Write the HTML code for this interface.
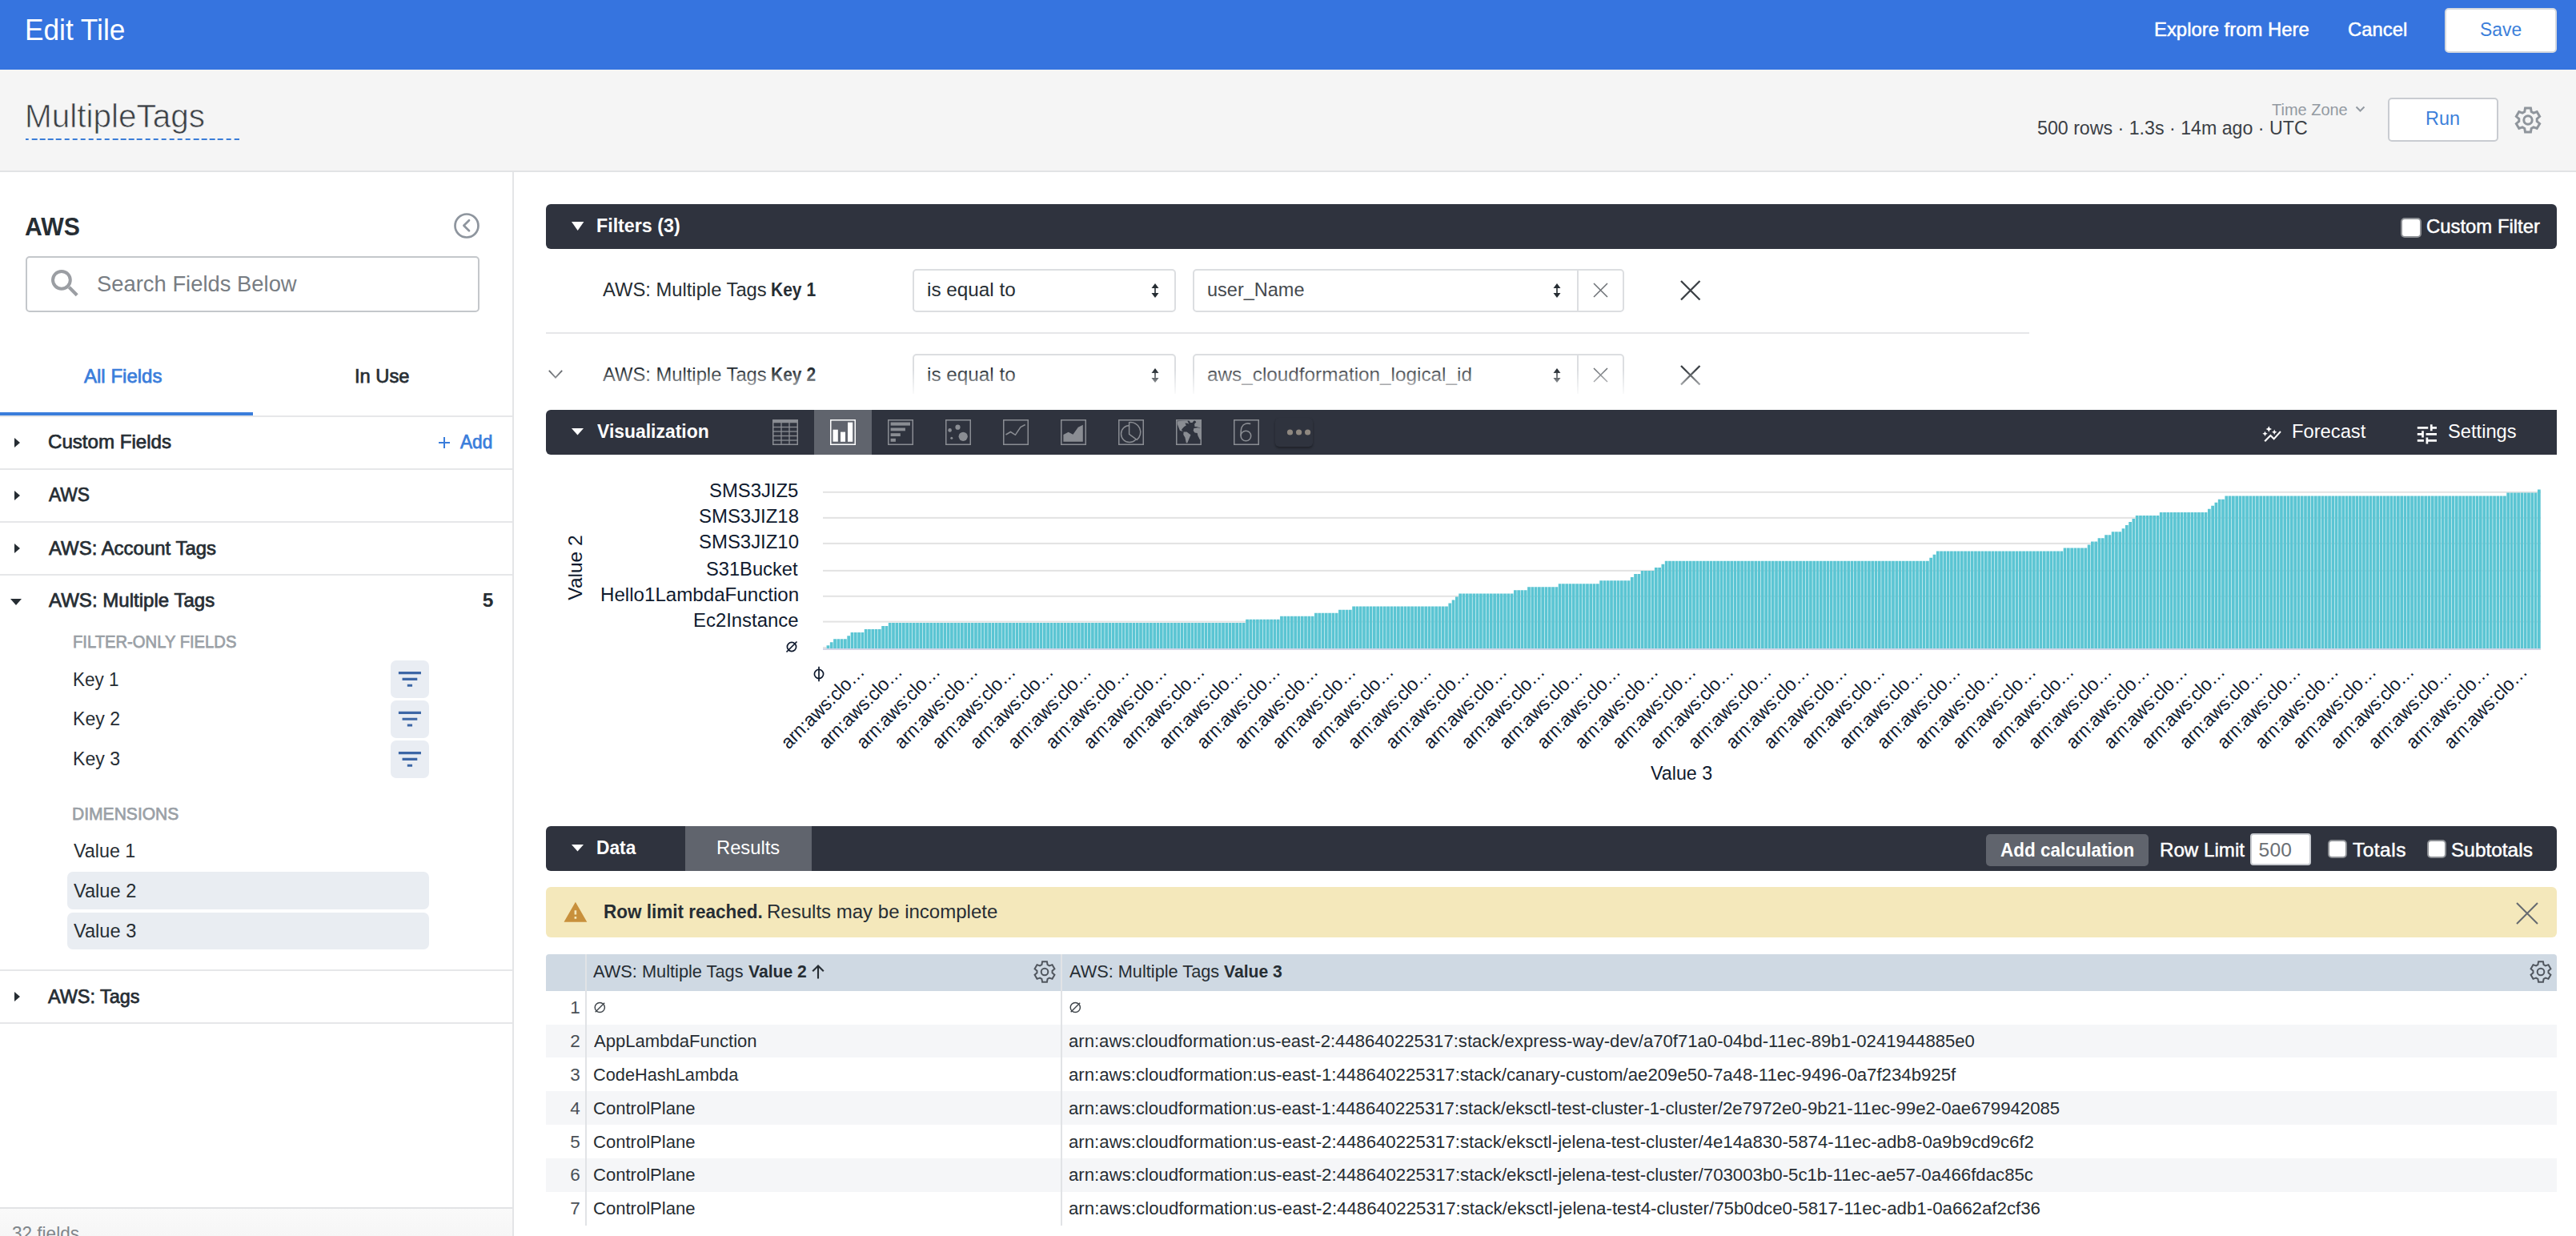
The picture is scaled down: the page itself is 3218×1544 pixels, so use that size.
<!DOCTYPE html>
<html><head><meta charset="utf-8"><style>
html,body{margin:0;padding:0;}
body{width:3218px;height:1544px;position:relative;overflow:hidden;background:#fff;font-family:'Liberation Sans', sans-serif;}
.t{position:absolute;white-space:nowrap;}
svg{display:block}
</style></head><body>
<div style="position:absolute;left:0.0px;top:0.0px;width:3218.0px;height:87.0px;background:#3674df;z-index:0"></div>
<div style="position:absolute;left:3054.0px;top:10.3px;width:140.0px;height:56.2px;background:#fff;border:2px solid #d6d9de;border-radius:5px;box-sizing:border-box;z-index:2"></div>
<div style="position:absolute;left:0.0px;top:87.0px;width:3218.0px;height:126.0px;background:#f5f5f5;z-index:0"></div>
<div style="position:absolute;left:0.0px;top:213.0px;width:3218.0px;height:2.0px;background:#e2e3e5;z-index:1"></div>
<div style="position:absolute;left:32px;top:173px;width:267px;height:2px;z-index:2;background:repeating-linear-gradient(90deg,#3b7dd8 0 6.4px,transparent 6.4px 10.1px);background-position:-2.3px 0"></div>
<svg style="position:absolute;left:2942.00px;top:132.00px;z-index:6;overflow:visible" width="13" height="8" viewBox="0 0 13 8"><path d="M1.5 1.5 L6.5 6.5 L11.5 1.5" fill="none" stroke="#939aa2" stroke-width="2"/></svg>
<div style="position:absolute;left:2982.7px;top:121.9px;width:138.7px;height:55.1px;background:#fff;border:2px solid #c9ccd1;border-radius:5px;box-sizing:border-box;z-index:2"></div>
<svg style="position:absolute;left:3138.00px;top:130.00px;z-index:6;overflow:visible" width="40" height="40" viewBox="0 0 40 40"><path d="M15.76 9.50 L16.56 5.09 L23.44 5.09 L24.24 9.50 L26.97 11.08 L31.19 9.57 L34.63 15.53 L31.21 18.42 L31.21 21.58 L34.63 24.47 L31.19 30.43 L26.97 28.92 L24.24 30.50 L23.44 34.91 L16.56 34.91 L15.76 30.50 L13.03 28.92 L8.81 30.43 L5.37 24.47 L8.79 21.58 L8.79 18.42 L5.37 15.53 L8.81 9.57 L13.03 11.08Z" fill="none" stroke="#8f959c" stroke-width="3" stroke-linejoin="miter"/><circle cx="20" cy="20" r="5.2" fill="none" stroke="#8f959c" stroke-width="3"/></svg>
<div style="position:absolute;left:640.0px;top:215.0px;width:2.0px;height:1329.0px;background:#e4e5e7;z-index:3"></div>
<svg style="position:absolute;left:565.00px;top:264.00px;z-index:6;overflow:visible" width="36" height="36" viewBox="0 0 36 36"><circle cx="18" cy="18" r="14.5" fill="none" stroke="#8e959e" stroke-width="2.7"/><path d="M21 11.3 L14.4 17.8 L21 24.3" fill="none" stroke="#8e959e" stroke-width="2.7" stroke-linecap="round" stroke-linejoin="round"/></svg>
<div style="position:absolute;left:32.4px;top:319.7px;width:567.1px;height:70.3px;background:#fff;border:2px solid #c4c7cb;border-radius:5px;box-sizing:border-box;z-index:2"></div>
<svg style="position:absolute;left:60.00px;top:332.00px;z-index:6;overflow:visible" width="44" height="44" viewBox="0 0 44 44"><circle cx="16.9" cy="17.8" r="10.9" fill="none" stroke="#9b9ea3" stroke-width="4"/><path d="M26.3 26.8 L36.2 36.7" stroke="#9b9ea3" stroke-width="4.2"/></svg>
<div style="position:absolute;left:0.0px;top:515.0px;width:315.6px;height:3.5px;background:#3a7ddb;z-index:3"></div>
<div style="position:absolute;left:0.0px;top:519.0px;width:640.0px;height:2.0px;background:#e6e7e9;z-index:2"></div>
<svg style="position:absolute;left:17.50px;top:546.80px;z-index:6;overflow:visible" width="8" height="12" viewBox="0 0 8 12"><path d="M0 0 L7 6 L0 12Z" fill="#262d33"/></svg>
<svg style="position:absolute;left:17.50px;top:612.50px;z-index:6;overflow:visible" width="8" height="12" viewBox="0 0 8 12"><path d="M0 0 L7 6 L0 12Z" fill="#262d33"/></svg>
<svg style="position:absolute;left:17.50px;top:678.80px;z-index:6;overflow:visible" width="8" height="12" viewBox="0 0 8 12"><path d="M0 0 L7 6 L0 12Z" fill="#262d33"/></svg>
<svg style="position:absolute;left:548.00px;top:546.00px;z-index:6;overflow:visible" width="14" height="14" viewBox="0 0 14 14"><path d="M7 0 V14 M0 7 H14" stroke="#3a7ddb" stroke-width="2"/></svg>
<div style="position:absolute;left:0.0px;top:585.0px;width:640.0px;height:2.0px;background:#e6e7e9;z-index:2"></div>
<div style="position:absolute;left:0.0px;top:651.0px;width:640.0px;height:2.0px;background:#e6e7e9;z-index:2"></div>
<div style="position:absolute;left:0.0px;top:717.0px;width:640.0px;height:2.0px;background:#e6e7e9;z-index:2"></div>
<svg style="position:absolute;left:13.00px;top:747.50px;z-index:6;overflow:visible" width="14" height="8" viewBox="0 0 14 8"><path d="M0 0 L14 0 L7.0 8Z" fill="#262d33"/></svg>
<div style="position:absolute;left:488.0px;top:825.4px;width:47.7px;height:47.0px;background:#e9edf3;border-radius:7px;z-index:2"></div>
<svg style="position:absolute;left:0.00px;top:0.00px;z-index:6;overflow:visible" width="3218" height="1544" viewBox="0 0 3218 1544"><path transform="translate(493.2 829.70) scale(1.56)" fill="#3d67a6" d="M10 18h4v-2h-4v2zM3 6v2h18V6H3zm3 7h12v-2H6v2z"/></svg>
<div style="position:absolute;left:488.0px;top:875.2px;width:47.7px;height:47.0px;background:#e9edf3;border-radius:7px;z-index:2"></div>
<svg style="position:absolute;left:0.00px;top:0.00px;z-index:6;overflow:visible" width="3218" height="1544" viewBox="0 0 3218 1544"><path transform="translate(493.2 879.50) scale(1.56)" fill="#3d67a6" d="M10 18h4v-2h-4v2zM3 6v2h18V6H3zm3 7h12v-2H6v2z"/></svg>
<div style="position:absolute;left:488.0px;top:925.4px;width:47.7px;height:47.0px;background:#e9edf3;border-radius:7px;z-index:2"></div>
<svg style="position:absolute;left:0.00px;top:0.00px;z-index:6;overflow:visible" width="3218" height="1544" viewBox="0 0 3218 1544"><path transform="translate(493.2 929.70) scale(1.56)" fill="#3d67a6" d="M10 18h4v-2h-4v2zM3 6v2h18V6H3zm3 7h12v-2H6v2z"/></svg>
<div style="position:absolute;left:84.0px;top:1089.0px;width:451.7px;height:47.2px;background:#e9edf2;border-radius:7px;z-index:2"></div>
<div style="position:absolute;left:84.0px;top:1139.5px;width:451.7px;height:46.8px;background:#e9edf2;border-radius:7px;z-index:2"></div>
<div style="position:absolute;left:0.0px;top:1211.0px;width:640.0px;height:2.0px;background:#e6e7e9;z-index:2"></div>
<svg style="position:absolute;left:17.50px;top:1239.00px;z-index:6;overflow:visible" width="8" height="12" viewBox="0 0 8 12"><path d="M0 0 L7 6 L0 12Z" fill="#262d33"/></svg>
<div style="position:absolute;left:0.0px;top:1277.0px;width:640.0px;height:2.0px;background:#e6e7e9;z-index:2"></div>
<div style="position:absolute;left:0.0px;top:1509.0px;width:640.0px;height:35.0px;background:linear-gradient(#fafafa,#f6f6f6);z-index:1"></div>
<div style="position:absolute;left:0.0px;top:1508.0px;width:640.0px;height:2.0px;background:#e2e3e5;z-index:2"></div>
<div style="position:absolute;left:682.0px;top:255.0px;width:2512.0px;height:55.5px;background:#2f333e;border-radius:6px;z-index:2"></div>
<svg style="position:absolute;left:714.30px;top:277.00px;z-index:6;overflow:visible" width="16" height="11" viewBox="0 0 16 11"><path d="M0 0 H15.4 L7.7 11Z" fill="#fff"/></svg>
<div style="position:absolute;left:2999.2px;top:272.2px;width:25.4px;height:25.1px;background:#fff;border:2px solid #8c8f94;border-radius:5px;box-sizing:border-box;z-index:3"></div>
<div style="position:absolute;left:1140.0px;top:335.6px;width:329.3px;height:54.5px;background:#fff;border:2px solid #dcdee1;border-radius:5px;box-sizing:border-box;z-index:2"></div>
<svg style="position:absolute;left:1437.80px;top:353.60px;z-index:6;overflow:visible" width="10" height="18" viewBox="0 0 10 18"><path d="M5 0 L9.5 6 H0.5Z M5 18 L9.5 12 H0.5Z" fill="#262d33"/><path d="M5 5 V13" stroke="#262d33" stroke-width="1.6"/></svg>
<div style="position:absolute;left:1490.2px;top:335.6px;width:538.8px;height:54.5px;background:#fff;border:2px solid #dcdee1;border-radius:5px;box-sizing:border-box;z-index:2"></div>
<div style="position:absolute;left:1970.2px;top:335.6px;width:2.0px;height:54.5px;background:#dcdee1;z-index:3"></div>
<svg style="position:absolute;left:1939.70px;top:353.60px;z-index:6;overflow:visible" width="10" height="18" viewBox="0 0 10 18"><path d="M5 0 L9.5 6 H0.5Z M5 18 L9.5 12 H0.5Z" fill="#262d33"/><path d="M5 5 V13" stroke="#262d33" stroke-width="1.6"/></svg>
<svg style="position:absolute;left:1991.20px;top:354.10px;z-index:6;overflow:visible" width="17" height="17" viewBox="0 0 17 17"><path d="M0 0 L17 17 M17 0 L0 17" stroke="#6b6f74" stroke-width="1.5"/></svg>
<svg style="position:absolute;left:2099.85px;top:350.85px;z-index:6;overflow:visible" width="23.5" height="23.5" viewBox="0 0 23.5 23.5"><path d="M0 0 L23.5 23.5 M23.5 0 L0 23.5" stroke="#3a3f44" stroke-width="2.3"/></svg>
<div style="position:absolute;left:682.0px;top:415.0px;width:1853.0px;height:2.0px;background:#e6e7e9;z-index:2"></div>
<svg style="position:absolute;left:684.80px;top:462.00px;z-index:6;overflow:visible" width="18" height="12" viewBox="0 0 18 12"><path d="M0.8 0.8 L9 9.6 L17.2 0.8" fill="none" stroke="#5f6368" stroke-width="1.8"/></svg>
<div style="position:absolute;left:1140.0px;top:441.7px;width:329.3px;height:54.5px;background:#fff;border:2px solid #dcdee1;border-radius:5px;box-sizing:border-box;z-index:2"></div>
<svg style="position:absolute;left:1437.80px;top:459.70px;z-index:6;overflow:visible" width="10" height="18" viewBox="0 0 10 18"><path d="M5 0 L9.5 6 H0.5Z M5 18 L9.5 12 H0.5Z" fill="#262d33"/><path d="M5 5 V13" stroke="#262d33" stroke-width="1.6"/></svg>
<div style="position:absolute;left:1490.2px;top:441.7px;width:538.8px;height:54.5px;background:#fff;border:2px solid #dcdee1;border-radius:5px;box-sizing:border-box;z-index:2"></div>
<div style="position:absolute;left:1970.2px;top:441.7px;width:2.0px;height:54.5px;background:#dcdee1;z-index:3"></div>
<svg style="position:absolute;left:1939.70px;top:459.70px;z-index:6;overflow:visible" width="10" height="18" viewBox="0 0 10 18"><path d="M5 0 L9.5 6 H0.5Z M5 18 L9.5 12 H0.5Z" fill="#262d33"/><path d="M5 5 V13" stroke="#262d33" stroke-width="1.6"/></svg>
<svg style="position:absolute;left:1991.20px;top:460.20px;z-index:6;overflow:visible" width="17" height="17" viewBox="0 0 17 17"><path d="M0 0 L17 17 M17 0 L0 17" stroke="#6b6f74" stroke-width="1.5"/></svg>
<svg style="position:absolute;left:2099.85px;top:456.95px;z-index:6;overflow:visible" width="23.5" height="23.5" viewBox="0 0 23.5 23.5"><path d="M0 0 L23.5 23.5 M23.5 0 L0 23.5" stroke="#3a3f44" stroke-width="2.3"/></svg>
<div style="position:absolute;left:642.0px;top:492.0px;width:2576.0px;height:20.0px;background:#fff;z-index:20"></div>
<div style="position:absolute;left:642.0px;top:462.0px;width:2576.0px;height:30.0px;background:linear-gradient(rgba(255,255,255,0),rgba(255,255,255,0.85));z-index:19"></div>
<div style="position:absolute;left:682.0px;top:512.0px;width:2512.0px;height:55.5px;background:#2f333e;border-radius:6px 0 0 6px;z-index:2"></div>
<div style="position:absolute;left:1017.0px;top:512.0px;width:72.0px;height:55.5px;background:#60646d;z-index:3"></div>
<svg style="position:absolute;left:714.30px;top:534.50px;z-index:6;overflow:visible" width="16" height="9" viewBox="0 0 16 9"><path d="M0 0 H15 L7.5 8.6Z" fill="#fff"/></svg>
<svg style="position:absolute;left:965.00px;top:524.20px;z-index:6;overflow:visible" width="32" height="32" viewBox="0 0 32 32"><rect x="0.75" y="0.75" width="30.5" height="30.5" fill="none" stroke="#8a8d93" stroke-width="1.5"/><rect x="0.75" y="0.75" width="30.5" height="3.5" fill="#8a8d93"/><path d="M1 9.5 H31" stroke="#8a8d93" stroke-width="1.3"/><path d="M1 15 H31" stroke="#8a8d93" stroke-width="1.3"/><path d="M1 20.5 H31" stroke="#8a8d93" stroke-width="1.3"/><path d="M1 26 H31" stroke="#8a8d93" stroke-width="1.3"/><path d="M11 1 V31" stroke="#8a8d93" stroke-width="1.3"/><path d="M21 1 V31" stroke="#8a8d93" stroke-width="1.3"/></svg>
<svg style="position:absolute;left:1037.00px;top:524.20px;z-index:6;overflow:visible" width="32" height="32" viewBox="0 0 32 32"><rect x="0.75" y="0.75" width="30.5" height="30.5" fill="none" stroke="#fff" stroke-width="1.5"/><rect x="3.5" y="12.7" width="6.3" height="15" fill="#fff"/><rect x="13" y="15.6" width="6" height="12.2" fill="#fff"/><rect x="22" y="3.6" width="6.2" height="24.2" fill="#fff"/></svg>
<svg style="position:absolute;left:1109.00px;top:524.20px;z-index:6;overflow:visible" width="32" height="32" viewBox="0 0 32 32"><rect x="0.75" y="0.75" width="30.5" height="30.5" fill="none" stroke="#8a8d93" stroke-width="1.5"/><rect x="3.6" y="3.5" width="24.4" height="4.1" fill="#8a8d93"/><rect x="3.6" y="10.5" width="18.3" height="3.8" fill="#8a8d93"/><rect x="3.6" y="17.2" width="12.2" height="3.8" fill="#8a8d93"/><rect x="3.6" y="23.8" width="6.3" height="4" fill="#8a8d93"/></svg>
<svg style="position:absolute;left:1181.20px;top:524.20px;z-index:6;overflow:visible" width="32" height="32" viewBox="0 0 32 32"><rect x="0.75" y="0.75" width="30.5" height="30.5" fill="none" stroke="#8a8d93" stroke-width="1.5"/><circle cx="5.6" cy="13.4" r="2.3" fill="#8a8d93"/><circle cx="15.5" cy="9.7" r="3.1" fill="#8a8d93"/><circle cx="7.8" cy="23.3" r="1.5" fill="#8a8d93"/><circle cx="22.2" cy="21.3" r="5.6" fill="#8a8d93"/></svg>
<svg style="position:absolute;left:1253.10px;top:524.20px;z-index:6;overflow:visible" width="32" height="32" viewBox="0 0 32 32"><rect x="0.75" y="0.75" width="30.5" height="30.5" fill="none" stroke="#8a8d93" stroke-width="1.5"/><path d="M3.5 19 L9.5 15.5 L15.4 19.3 L21.9 9.6 L27.7 6.5" fill="none" stroke="#8a8d93" stroke-width="1.5"/></svg>
<svg style="position:absolute;left:1325.10px;top:524.20px;z-index:6;overflow:visible" width="32" height="32" viewBox="0 0 32 32"><rect x="0.75" y="0.75" width="30.5" height="30.5" fill="none" stroke="#8a8d93" stroke-width="1.5"/><path d="M3.4 19 L9.6 15.8 L15.4 18.8 L21.8 9.7 L27.8 6.8 V27.7 H3.4Z" fill="#8a8d93"/></svg>
<svg style="position:absolute;left:1397.10px;top:524.20px;z-index:6;overflow:visible" width="32" height="32" viewBox="0 0 32 32"><rect x="0.75" y="0.75" width="30.5" height="30.5" fill="none" stroke="#8a8d93" stroke-width="1.5"/><circle cx="14" cy="18" r="10.5" fill="none" stroke="#8a8d93" stroke-width="1.5"/><path d="M13.6 3.7 A12.3 12.3 0 0 1 23.2 25.4 L13.6 18.3Z" fill="#2f333e" stroke="#8a8d93" stroke-width="1.5"/></svg>
<svg style="position:absolute;left:1468.50px;top:524.20px;z-index:6;overflow:visible" width="32" height="32" viewBox="0 0 32 32"><rect x="0.75" y="0.75" width="30.5" height="30.5" fill="none" stroke="#8a8d93" stroke-width="1.5"/><path d="M1.6 2.2 L8 1.8 L14.2 1.6 L16.4 5.7 L14.2 4.8 L11.4 4.6 L12.8 7.5 L10.3 8.9 L7.1 12.5 L8.2 15 L9.6 16 L6.8 14.2 L5 13.9 L3.2 9.6 L1.8 5.7Z M16.6 1.1 L22.8 1.1 L20.6 3.9 L18 3.9Z M23.5 1.1 L31.6 1.1 L31.6 10.7 L28.8 10 L25.6 8.9 L23.5 8.9 L23.1 5.7 L25.3 3.2Z M22.4 11 L27.1 10.3 L31.6 11 L31.6 24.6 L29.9 25.3 L27.4 20.3 L26.7 17.1 L23.5 16.4 L21.7 13.9Z M9.6 15.6 L13.5 15.5 L18.5 19.2 L17.1 22.4 L14.2 29.5 L12.8 29.2 L11.4 22.4 L9.3 18.9Z" fill="#8a8d93"/></svg>
<svg style="position:absolute;left:1541.30px;top:524.20px;z-index:6;overflow:visible" width="32" height="32" viewBox="0 0 32 32"><rect x="0.75" y="0.75" width="30.5" height="30.5" fill="none" stroke="#8a8d93" stroke-width="1.5"/><path d="M21.3 5.6 C17.5 4.2 12.5 4.8 10.3 9.5 C9.2 12 9 15 9.1 20.3" fill="none" stroke="#8a8d93" stroke-width="1.6"/><circle cx="15.4" cy="20.5" r="6.3" fill="none" stroke="#8a8d93" stroke-width="1.6"/></svg>
<div style="position:absolute;left:1593.0px;top:521.6px;width:47.3px;height:36.4px;background:#2f333e;border-radius:5px;box-shadow:0 2px 3px rgba(0,0,0,0.35);z-index:3"></div>
<svg style="position:absolute;left:1605.00px;top:535.00px;z-index:6;overflow:visible" width="34" height="10" viewBox="0 0 34 10"><circle cx="6.5" cy="5" r="3.6" fill="#8f8880"/><circle cx="17.6" cy="5" r="3.6" fill="#8f8880"/><circle cx="28.6" cy="5" r="3.6" fill="#8f8880"/></svg>
<svg style="position:absolute;left:0.00px;top:0.00px;z-index:6;overflow:visible" width="3218" height="1544" viewBox="0 0 3218 1544"><path transform="translate(2825.24 530.17) scale(1.064)" fill="#fff" d="M14.06 9.94L12 9l2.06-.94L15 6l.94 2.06L18 9l-2.06.94L15 12zM4 14l.94-2.06L7 11l-2.06-.94L4 8l-.94 2.06L1 11l2.06.94zm4.5-5l1.09-2.41L12 5.5 9.59 4.41 8.5 2 7.41 4.41 5 5.5l2.41 1.09zm-4 11.5l6-6.01 4 4L23 8.93l-1.41-1.41-7.09 7.97-4-4L3 19l1.5 1.5z"/></svg>
<svg style="position:absolute;left:0.00px;top:0.00px;z-index:6;overflow:visible" width="3218" height="1544" viewBox="0 0 3218 1544"><path transform="translate(3015.77 526.27) scale(1.344)" fill="#fff" d="M3 17v2h6v-2H3zM3 5v2h10V5H3zm10 16v-2h8v-2h-8v-2h-2v6h2zM7 9v2H3v2h4v2h2V9H7zm14 4v-2H11v2h10zm-6-4h2V7h4V5h-4V3h-2v6z"/></svg>
<div class="t" style="left:658.75px;top:693.6px;width:120px;height:30px;text-align:center;font-size:24.5px;line-height:30px;color:#0f1a2e;transform:rotate(-90deg);z-index:5">Value 2</div>
<svg style="position:absolute;left:981.00px;top:800.00px;z-index:6;overflow:visible" width="16" height="16" viewBox="0 0 16 16"><circle cx="8" cy="8" r="5.6" fill="none" stroke="#0f1a2e" stroke-width="1.7"/><path d="M1.5 14.5 L14.5 1.5" stroke="#0f1a2e" stroke-width="1.7"/></svg>
<svg style="position:absolute;left:0;top:0;z-index:4" width="3218" height="1544" viewBox="0 0 3218 1544"><rect x="1028" y="775.60" width="2146" height="2" fill="#e3e3e3"/><rect x="1028" y="743.80" width="2146" height="2" fill="#e3e3e3"/><rect x="1028" y="711.90" width="2146" height="2" fill="#e3e3e3"/><rect x="1028" y="677.90" width="2146" height="2" fill="#e3e3e3"/><rect x="1028" y="645.90" width="2146" height="2" fill="#e3e3e3"/><rect x="1028" y="613.80" width="2146" height="2" fill="#e3e3e3"/><rect x="1028" y="808.0" width="4.292" height="2.4" fill="#e3e3e3"/><path d="M1032.57 810.4V806.34h3.73V810.4zM1036.86 810.4V802.28h3.73V810.4zM1041.16 810.4V798.22h3.73V810.4zM1045.45 810.4V798.22h3.73V810.4zM1049.74 810.4V798.22h3.73V810.4zM1054.03 810.4V798.22h3.73V810.4zM1058.32 810.4V794.16h3.73V810.4zM1062.62 810.4V790.10h3.73V810.4zM1066.91 810.4V790.10h3.73V810.4zM1071.20 810.4V790.10h3.73V810.4zM1075.49 810.4V790.10h3.73V810.4zM1079.78 810.4V786.04h3.73V810.4zM1084.08 810.4V786.04h3.73V810.4zM1088.37 810.4V786.04h3.73V810.4zM1092.66 810.4V786.04h3.73V810.4zM1096.95 810.4V786.04h3.73V810.4zM1101.24 810.4V781.98h3.73V810.4zM1105.54 810.4V781.98h3.73V810.4zM1109.83 810.4V777.92h3.73V810.4zM1114.12 810.4V777.92h3.73V810.4zM1118.41 810.4V777.92h3.73V810.4zM1122.70 810.4V777.92h3.73V810.4zM1127.00 810.4V777.92h3.73V810.4zM1131.29 810.4V777.92h3.73V810.4zM1135.58 810.4V777.92h3.73V810.4zM1139.87 810.4V777.92h3.73V810.4zM1144.16 810.4V777.92h3.73V810.4zM1148.46 810.4V777.92h3.73V810.4zM1152.75 810.4V777.92h3.73V810.4zM1157.04 810.4V777.92h3.73V810.4zM1161.33 810.4V777.92h3.73V810.4zM1165.62 810.4V777.92h3.73V810.4zM1169.92 810.4V777.92h3.73V810.4zM1174.21 810.4V777.92h3.73V810.4zM1178.50 810.4V777.92h3.73V810.4zM1182.79 810.4V777.92h3.73V810.4zM1187.08 810.4V777.92h3.73V810.4zM1191.38 810.4V777.92h3.73V810.4zM1195.67 810.4V777.92h3.73V810.4zM1199.96 810.4V777.92h3.73V810.4zM1204.25 810.4V777.92h3.73V810.4zM1208.54 810.4V777.92h3.73V810.4zM1212.84 810.4V777.92h3.73V810.4zM1217.13 810.4V777.92h3.73V810.4zM1221.42 810.4V777.92h3.73V810.4zM1225.71 810.4V777.92h3.73V810.4zM1230.00 810.4V777.92h3.73V810.4zM1234.30 810.4V777.92h3.73V810.4zM1238.59 810.4V777.92h3.73V810.4zM1242.88 810.4V777.92h3.73V810.4zM1247.17 810.4V777.92h3.73V810.4zM1251.46 810.4V777.92h3.73V810.4zM1255.76 810.4V777.92h3.73V810.4zM1260.05 810.4V777.92h3.73V810.4zM1264.34 810.4V777.92h3.73V810.4zM1268.63 810.4V777.92h3.73V810.4zM1272.92 810.4V777.92h3.73V810.4zM1277.22 810.4V777.92h3.73V810.4zM1281.51 810.4V777.92h3.73V810.4zM1285.80 810.4V777.92h3.73V810.4zM1290.09 810.4V777.92h3.73V810.4zM1294.38 810.4V777.92h3.73V810.4zM1298.68 810.4V777.92h3.73V810.4zM1302.97 810.4V777.92h3.73V810.4zM1307.26 810.4V777.92h3.73V810.4zM1311.55 810.4V777.92h3.73V810.4zM1315.84 810.4V777.92h3.73V810.4zM1320.14 810.4V777.92h3.73V810.4zM1324.43 810.4V777.92h3.73V810.4zM1328.72 810.4V777.92h3.73V810.4zM1333.01 810.4V777.92h3.73V810.4zM1337.30 810.4V777.92h3.73V810.4zM1341.60 810.4V777.92h3.73V810.4zM1345.89 810.4V777.92h3.73V810.4zM1350.18 810.4V777.92h3.73V810.4zM1354.47 810.4V777.92h3.73V810.4zM1358.76 810.4V777.92h3.73V810.4zM1363.06 810.4V777.92h3.73V810.4zM1367.35 810.4V777.92h3.73V810.4zM1371.64 810.4V777.92h3.73V810.4zM1375.93 810.4V777.92h3.73V810.4zM1380.22 810.4V777.92h3.73V810.4zM1384.52 810.4V777.92h3.73V810.4zM1388.81 810.4V777.92h3.73V810.4zM1393.10 810.4V777.92h3.73V810.4zM1397.39 810.4V777.92h3.73V810.4zM1401.68 810.4V777.92h3.73V810.4zM1405.98 810.4V777.92h3.73V810.4zM1410.27 810.4V777.92h3.73V810.4zM1414.56 810.4V777.92h3.73V810.4zM1418.85 810.4V777.92h3.73V810.4zM1423.14 810.4V777.92h3.73V810.4zM1427.44 810.4V777.92h3.73V810.4zM1431.73 810.4V777.92h3.73V810.4zM1436.02 810.4V777.92h3.73V810.4zM1440.31 810.4V777.92h3.73V810.4zM1444.60 810.4V777.92h3.73V810.4zM1448.90 810.4V777.92h3.73V810.4zM1453.19 810.4V777.92h3.73V810.4zM1457.48 810.4V777.92h3.73V810.4zM1461.77 810.4V777.92h3.73V810.4zM1466.06 810.4V777.92h3.73V810.4zM1470.36 810.4V777.92h3.73V810.4zM1474.65 810.4V777.92h3.73V810.4zM1478.94 810.4V777.92h3.73V810.4zM1483.23 810.4V777.92h3.73V810.4zM1487.52 810.4V777.92h3.73V810.4zM1491.82 810.4V777.92h3.73V810.4zM1496.11 810.4V777.92h3.73V810.4zM1500.40 810.4V777.92h3.73V810.4zM1504.69 810.4V777.92h3.73V810.4zM1508.98 810.4V777.92h3.73V810.4zM1513.28 810.4V777.92h3.73V810.4zM1517.57 810.4V777.92h3.73V810.4zM1521.86 810.4V777.92h3.73V810.4zM1526.15 810.4V777.92h3.73V810.4zM1530.44 810.4V777.92h3.73V810.4zM1534.74 810.4V777.92h3.73V810.4zM1539.03 810.4V777.92h3.73V810.4zM1543.32 810.4V777.92h3.73V810.4zM1547.61 810.4V777.92h3.73V810.4zM1551.90 810.4V777.92h3.73V810.4zM1556.20 810.4V773.86h3.73V810.4zM1560.49 810.4V773.86h3.73V810.4zM1564.78 810.4V773.86h3.73V810.4zM1569.07 810.4V773.86h3.73V810.4zM1573.36 810.4V773.86h3.73V810.4zM1577.66 810.4V773.86h3.73V810.4zM1581.95 810.4V773.86h3.73V810.4zM1586.24 810.4V773.86h3.73V810.4zM1590.53 810.4V773.86h3.73V810.4zM1594.82 810.4V773.86h3.73V810.4zM1599.12 810.4V769.80h3.73V810.4zM1603.41 810.4V769.80h3.73V810.4zM1607.70 810.4V769.80h3.73V810.4zM1611.99 810.4V769.80h3.73V810.4zM1616.28 810.4V769.80h3.73V810.4zM1620.58 810.4V769.80h3.73V810.4zM1624.87 810.4V769.80h3.73V810.4zM1629.16 810.4V769.80h3.73V810.4zM1633.45 810.4V769.80h3.73V810.4zM1637.74 810.4V769.80h3.73V810.4zM1642.04 810.4V765.74h3.73V810.4zM1646.33 810.4V765.74h3.73V810.4zM1650.62 810.4V765.74h3.73V810.4zM1654.91 810.4V765.74h3.73V810.4zM1659.20 810.4V765.74h3.73V810.4zM1663.50 810.4V765.74h3.73V810.4zM1667.79 810.4V765.74h3.73V810.4zM1672.08 810.4V761.68h3.73V810.4zM1676.37 810.4V761.68h3.73V810.4zM1680.66 810.4V761.68h3.73V810.4zM1684.96 810.4V761.68h3.73V810.4zM1689.25 810.4V757.62h3.73V810.4zM1693.54 810.4V757.62h3.73V810.4zM1697.83 810.4V757.62h3.73V810.4zM1702.12 810.4V757.62h3.73V810.4zM1706.42 810.4V757.62h3.73V810.4zM1710.71 810.4V757.62h3.73V810.4zM1715.00 810.4V757.62h3.73V810.4zM1719.29 810.4V757.62h3.73V810.4zM1723.58 810.4V757.62h3.73V810.4zM1727.88 810.4V757.62h3.73V810.4zM1732.17 810.4V757.62h3.73V810.4zM1736.46 810.4V757.62h3.73V810.4zM1740.75 810.4V757.62h3.73V810.4zM1745.04 810.4V757.62h3.73V810.4zM1749.34 810.4V757.62h3.73V810.4zM1753.63 810.4V757.62h3.73V810.4zM1757.92 810.4V757.62h3.73V810.4zM1762.21 810.4V757.62h3.73V810.4zM1766.50 810.4V757.62h3.73V810.4zM1770.80 810.4V757.62h3.73V810.4zM1775.09 810.4V757.62h3.73V810.4zM1779.38 810.4V757.62h3.73V810.4zM1783.67 810.4V757.62h3.73V810.4zM1787.96 810.4V757.62h3.73V810.4zM1792.26 810.4V757.62h3.73V810.4zM1796.55 810.4V757.62h3.73V810.4zM1800.84 810.4V757.62h3.73V810.4zM1805.13 810.4V757.62h3.73V810.4zM1809.42 810.4V753.56h3.73V810.4zM1813.72 810.4V749.50h3.73V810.4zM1818.01 810.4V745.44h3.73V810.4zM1822.30 810.4V741.38h3.73V810.4zM1826.59 810.4V741.38h3.73V810.4zM1830.88 810.4V741.38h3.73V810.4zM1835.18 810.4V741.38h3.73V810.4zM1839.47 810.4V741.38h3.73V810.4zM1843.76 810.4V741.38h3.73V810.4zM1848.05 810.4V741.38h3.73V810.4zM1852.34 810.4V741.38h3.73V810.4zM1856.64 810.4V741.38h3.73V810.4zM1860.93 810.4V741.38h3.73V810.4zM1865.22 810.4V741.38h3.73V810.4zM1869.51 810.4V741.38h3.73V810.4zM1873.80 810.4V741.38h3.73V810.4zM1878.10 810.4V741.38h3.73V810.4zM1882.39 810.4V741.38h3.73V810.4zM1886.68 810.4V741.38h3.73V810.4zM1890.97 810.4V737.32h3.73V810.4zM1895.26 810.4V737.32h3.73V810.4zM1899.56 810.4V737.32h3.73V810.4zM1903.85 810.4V737.32h3.73V810.4zM1908.14 810.4V733.26h3.73V810.4zM1912.43 810.4V733.26h3.73V810.4zM1916.72 810.4V733.26h3.73V810.4zM1921.02 810.4V733.26h3.73V810.4zM1925.31 810.4V733.26h3.73V810.4zM1929.60 810.4V733.26h3.73V810.4zM1933.89 810.4V733.26h3.73V810.4zM1938.18 810.4V733.26h3.73V810.4zM1942.48 810.4V733.26h3.73V810.4zM1946.77 810.4V729.20h3.73V810.4zM1951.06 810.4V729.20h3.73V810.4zM1955.35 810.4V729.20h3.73V810.4zM1959.64 810.4V729.20h3.73V810.4zM1963.94 810.4V729.20h3.73V810.4zM1968.23 810.4V729.20h3.73V810.4zM1972.52 810.4V729.20h3.73V810.4zM1976.81 810.4V729.20h3.73V810.4zM1981.10 810.4V729.20h3.73V810.4zM1985.40 810.4V729.20h3.73V810.4zM1989.69 810.4V729.20h3.73V810.4zM1993.98 810.4V729.20h3.73V810.4zM1998.27 810.4V725.14h3.73V810.4zM2002.56 810.4V725.14h3.73V810.4zM2006.86 810.4V725.14h3.73V810.4zM2011.15 810.4V725.14h3.73V810.4zM2015.44 810.4V725.14h3.73V810.4zM2019.73 810.4V725.14h3.73V810.4zM2024.02 810.4V725.14h3.73V810.4zM2028.32 810.4V725.14h3.73V810.4zM2032.61 810.4V725.14h3.73V810.4zM2036.90 810.4V721.08h3.73V810.4zM2041.19 810.4V717.02h3.73V810.4zM2045.48 810.4V717.02h3.73V810.4zM2049.78 810.4V712.96h3.73V810.4zM2054.07 810.4V712.96h3.73V810.4zM2058.36 810.4V712.96h3.73V810.4zM2062.65 810.4V712.96h3.73V810.4zM2066.94 810.4V708.90h3.73V810.4zM2071.24 810.4V708.90h3.73V810.4zM2075.53 810.4V704.84h3.73V810.4zM2079.82 810.4V700.78h3.73V810.4zM2084.11 810.4V700.78h3.73V810.4zM2088.40 810.4V700.78h3.73V810.4zM2092.70 810.4V700.78h3.73V810.4zM2096.99 810.4V700.78h3.73V810.4zM2101.28 810.4V700.78h3.73V810.4zM2105.57 810.4V700.78h3.73V810.4zM2109.86 810.4V700.78h3.73V810.4zM2114.16 810.4V700.78h3.73V810.4zM2118.45 810.4V700.78h3.73V810.4zM2122.74 810.4V700.78h3.73V810.4zM2127.03 810.4V700.78h3.73V810.4zM2131.32 810.4V700.78h3.73V810.4zM2135.62 810.4V700.78h3.73V810.4zM2139.91 810.4V700.78h3.73V810.4zM2144.20 810.4V700.78h3.73V810.4zM2148.49 810.4V700.78h3.73V810.4zM2152.78 810.4V700.78h3.73V810.4zM2157.08 810.4V700.78h3.73V810.4zM2161.37 810.4V700.78h3.73V810.4zM2165.66 810.4V700.78h3.73V810.4zM2169.95 810.4V700.78h3.73V810.4zM2174.24 810.4V700.78h3.73V810.4zM2178.54 810.4V700.78h3.73V810.4zM2182.83 810.4V700.78h3.73V810.4zM2187.12 810.4V700.78h3.73V810.4zM2191.41 810.4V700.78h3.73V810.4zM2195.70 810.4V700.78h3.73V810.4zM2200.00 810.4V700.78h3.73V810.4zM2204.29 810.4V700.78h3.73V810.4zM2208.58 810.4V700.78h3.73V810.4zM2212.87 810.4V700.78h3.73V810.4zM2217.16 810.4V700.78h3.73V810.4zM2221.46 810.4V700.78h3.73V810.4zM2225.75 810.4V700.78h3.73V810.4zM2230.04 810.4V700.78h3.73V810.4zM2234.33 810.4V700.78h3.73V810.4zM2238.62 810.4V700.78h3.73V810.4zM2242.92 810.4V700.78h3.73V810.4zM2247.21 810.4V700.78h3.73V810.4zM2251.50 810.4V700.78h3.73V810.4zM2255.79 810.4V700.78h3.73V810.4zM2260.08 810.4V700.78h3.73V810.4zM2264.38 810.4V700.78h3.73V810.4zM2268.67 810.4V700.78h3.73V810.4zM2272.96 810.4V700.78h3.73V810.4zM2277.25 810.4V700.78h3.73V810.4zM2281.54 810.4V700.78h3.73V810.4zM2285.84 810.4V700.78h3.73V810.4zM2290.13 810.4V700.78h3.73V810.4zM2294.42 810.4V700.78h3.73V810.4zM2298.71 810.4V700.78h3.73V810.4zM2303.00 810.4V700.78h3.73V810.4zM2307.30 810.4V700.78h3.73V810.4zM2311.59 810.4V700.78h3.73V810.4zM2315.88 810.4V700.78h3.73V810.4zM2320.17 810.4V700.78h3.73V810.4zM2324.46 810.4V700.78h3.73V810.4zM2328.76 810.4V700.78h3.73V810.4zM2333.05 810.4V700.78h3.73V810.4zM2337.34 810.4V700.78h3.73V810.4zM2341.63 810.4V700.78h3.73V810.4zM2345.92 810.4V700.78h3.73V810.4zM2350.22 810.4V700.78h3.73V810.4zM2354.51 810.4V700.78h3.73V810.4zM2358.80 810.4V700.78h3.73V810.4zM2363.09 810.4V700.78h3.73V810.4zM2367.38 810.4V700.78h3.73V810.4zM2371.68 810.4V700.78h3.73V810.4zM2375.97 810.4V700.78h3.73V810.4zM2380.26 810.4V700.78h3.73V810.4zM2384.55 810.4V700.78h3.73V810.4zM2388.84 810.4V700.78h3.73V810.4zM2393.14 810.4V700.78h3.73V810.4zM2397.43 810.4V700.78h3.73V810.4zM2401.72 810.4V700.78h3.73V810.4zM2406.01 810.4V700.78h3.73V810.4zM2410.30 810.4V696.72h3.73V810.4zM2414.60 810.4V692.66h3.73V810.4zM2418.89 810.4V688.60h3.73V810.4zM2423.18 810.4V688.60h3.73V810.4zM2427.47 810.4V688.60h3.73V810.4zM2431.76 810.4V688.60h3.73V810.4zM2436.06 810.4V688.60h3.73V810.4zM2440.35 810.4V688.60h3.73V810.4zM2444.64 810.4V688.60h3.73V810.4zM2448.93 810.4V688.60h3.73V810.4zM2453.22 810.4V688.60h3.73V810.4zM2457.52 810.4V688.60h3.73V810.4zM2461.81 810.4V688.60h3.73V810.4zM2466.10 810.4V688.60h3.73V810.4zM2470.39 810.4V688.60h3.73V810.4zM2474.68 810.4V688.60h3.73V810.4zM2478.98 810.4V688.60h3.73V810.4zM2483.27 810.4V688.60h3.73V810.4zM2487.56 810.4V688.60h3.73V810.4zM2491.85 810.4V688.60h3.73V810.4zM2496.14 810.4V688.60h3.73V810.4zM2500.44 810.4V688.60h3.73V810.4zM2504.73 810.4V688.60h3.73V810.4zM2509.02 810.4V688.60h3.73V810.4zM2513.31 810.4V688.60h3.73V810.4zM2517.60 810.4V688.60h3.73V810.4zM2521.90 810.4V688.60h3.73V810.4zM2526.19 810.4V688.60h3.73V810.4zM2530.48 810.4V688.60h3.73V810.4zM2534.77 810.4V688.60h3.73V810.4zM2539.06 810.4V688.60h3.73V810.4zM2543.36 810.4V688.60h3.73V810.4zM2547.65 810.4V688.60h3.73V810.4zM2551.94 810.4V688.60h3.73V810.4zM2556.23 810.4V688.60h3.73V810.4zM2560.52 810.4V688.60h3.73V810.4zM2564.82 810.4V688.60h3.73V810.4zM2569.11 810.4V688.60h3.73V810.4zM2573.40 810.4V688.60h3.73V810.4zM2577.69 810.4V684.54h3.73V810.4zM2581.98 810.4V684.54h3.73V810.4zM2586.28 810.4V684.54h3.73V810.4zM2590.57 810.4V684.54h3.73V810.4zM2594.86 810.4V684.54h3.73V810.4zM2599.15 810.4V684.54h3.73V810.4zM2603.44 810.4V684.54h3.73V810.4zM2607.74 810.4V680.48h3.73V810.4zM2612.03 810.4V676.42h3.73V810.4zM2616.32 810.4V676.42h3.73V810.4zM2620.61 810.4V672.36h3.73V810.4zM2624.90 810.4V672.36h3.73V810.4zM2629.20 810.4V668.30h3.73V810.4zM2633.49 810.4V668.30h3.73V810.4zM2637.78 810.4V664.24h3.73V810.4zM2642.07 810.4V664.24h3.73V810.4zM2646.36 810.4V664.24h3.73V810.4zM2650.66 810.4V660.18h3.73V810.4zM2654.95 810.4V656.12h3.73V810.4zM2659.24 810.4V652.06h3.73V810.4zM2663.53 810.4V648.00h3.73V810.4zM2667.82 810.4V643.94h3.73V810.4zM2672.12 810.4V643.94h3.73V810.4zM2676.41 810.4V643.94h3.73V810.4zM2680.70 810.4V643.94h3.73V810.4zM2684.99 810.4V643.94h3.73V810.4zM2689.28 810.4V643.94h3.73V810.4zM2693.58 810.4V643.94h3.73V810.4zM2697.87 810.4V639.88h3.73V810.4zM2702.16 810.4V639.88h3.73V810.4zM2706.45 810.4V639.88h3.73V810.4zM2710.74 810.4V639.88h3.73V810.4zM2715.04 810.4V639.88h3.73V810.4zM2719.33 810.4V639.88h3.73V810.4zM2723.62 810.4V639.88h3.73V810.4zM2727.91 810.4V639.88h3.73V810.4zM2732.20 810.4V639.88h3.73V810.4zM2736.50 810.4V639.88h3.73V810.4zM2740.79 810.4V639.88h3.73V810.4zM2745.08 810.4V639.88h3.73V810.4zM2749.37 810.4V639.88h3.73V810.4zM2753.66 810.4V639.88h3.73V810.4zM2757.96 810.4V635.82h3.73V810.4zM2762.25 810.4V631.76h3.73V810.4zM2766.54 810.4V627.70h3.73V810.4zM2770.83 810.4V623.64h3.73V810.4zM2775.12 810.4V623.64h3.73V810.4zM2779.42 810.4V619.58h3.73V810.4zM2783.71 810.4V619.58h3.73V810.4zM2788.00 810.4V619.58h3.73V810.4zM2792.29 810.4V619.58h3.73V810.4zM2796.58 810.4V619.58h3.73V810.4zM2800.88 810.4V619.58h3.73V810.4zM2805.17 810.4V619.58h3.73V810.4zM2809.46 810.4V619.58h3.73V810.4zM2813.75 810.4V619.58h3.73V810.4zM2818.04 810.4V619.58h3.73V810.4zM2822.34 810.4V619.58h3.73V810.4zM2826.63 810.4V619.58h3.73V810.4zM2830.92 810.4V619.58h3.73V810.4zM2835.21 810.4V619.58h3.73V810.4zM2839.50 810.4V619.58h3.73V810.4zM2843.80 810.4V619.58h3.73V810.4zM2848.09 810.4V619.58h3.73V810.4zM2852.38 810.4V619.58h3.73V810.4zM2856.67 810.4V619.58h3.73V810.4zM2860.96 810.4V619.58h3.73V810.4zM2865.26 810.4V619.58h3.73V810.4zM2869.55 810.4V619.58h3.73V810.4zM2873.84 810.4V619.58h3.73V810.4zM2878.13 810.4V619.58h3.73V810.4zM2882.42 810.4V619.58h3.73V810.4zM2886.72 810.4V619.58h3.73V810.4zM2891.01 810.4V619.58h3.73V810.4zM2895.30 810.4V619.58h3.73V810.4zM2899.59 810.4V619.58h3.73V810.4zM2903.88 810.4V619.58h3.73V810.4zM2908.18 810.4V619.58h3.73V810.4zM2912.47 810.4V619.58h3.73V810.4zM2916.76 810.4V619.58h3.73V810.4zM2921.05 810.4V619.58h3.73V810.4zM2925.34 810.4V619.58h3.73V810.4zM2929.64 810.4V619.58h3.73V810.4zM2933.93 810.4V619.58h3.73V810.4zM2938.22 810.4V619.58h3.73V810.4zM2942.51 810.4V619.58h3.73V810.4zM2946.80 810.4V619.58h3.73V810.4zM2951.10 810.4V619.58h3.73V810.4zM2955.39 810.4V619.58h3.73V810.4zM2959.68 810.4V619.58h3.73V810.4zM2963.97 810.4V619.58h3.73V810.4zM2968.26 810.4V619.58h3.73V810.4zM2972.56 810.4V619.58h3.73V810.4zM2976.85 810.4V619.58h3.73V810.4zM2981.14 810.4V619.58h3.73V810.4zM2985.43 810.4V619.58h3.73V810.4zM2989.72 810.4V619.58h3.73V810.4zM2994.02 810.4V619.58h3.73V810.4zM2998.31 810.4V619.58h3.73V810.4zM3002.60 810.4V619.58h3.73V810.4zM3006.89 810.4V619.58h3.73V810.4zM3011.18 810.4V619.58h3.73V810.4zM3015.48 810.4V619.58h3.73V810.4zM3019.77 810.4V619.58h3.73V810.4zM3024.06 810.4V619.58h3.73V810.4zM3028.35 810.4V619.58h3.73V810.4zM3032.64 810.4V619.58h3.73V810.4zM3036.94 810.4V619.58h3.73V810.4zM3041.23 810.4V619.58h3.73V810.4zM3045.52 810.4V619.58h3.73V810.4zM3049.81 810.4V619.58h3.73V810.4zM3054.10 810.4V619.58h3.73V810.4zM3058.40 810.4V619.58h3.73V810.4zM3062.69 810.4V619.58h3.73V810.4zM3066.98 810.4V619.58h3.73V810.4zM3071.27 810.4V619.58h3.73V810.4zM3075.56 810.4V619.58h3.73V810.4zM3079.86 810.4V619.58h3.73V810.4zM3084.15 810.4V619.58h3.73V810.4zM3088.44 810.4V619.58h3.73V810.4zM3092.73 810.4V619.58h3.73V810.4zM3097.02 810.4V619.58h3.73V810.4zM3101.32 810.4V619.58h3.73V810.4zM3105.61 810.4V619.58h3.73V810.4zM3109.90 810.4V619.58h3.73V810.4zM3114.19 810.4V619.58h3.73V810.4zM3118.48 810.4V619.58h3.73V810.4zM3122.78 810.4V619.58h3.73V810.4zM3127.07 810.4V619.58h3.73V810.4zM3131.36 810.4V615.52h3.73V810.4zM3135.65 810.4V615.52h3.73V810.4zM3139.94 810.4V615.52h3.73V810.4zM3144.24 810.4V615.52h3.73V810.4zM3148.53 810.4V615.52h3.73V810.4zM3152.82 810.4V615.52h3.73V810.4zM3157.11 810.4V615.52h3.73V810.4zM3161.40 810.4V615.52h3.73V810.4zM3165.70 810.4V615.52h3.73V810.4zM3169.99 810.4V611.46h3.73V810.4z" fill="#5bc5d3"/><rect x="1028" y="810.0" width="2146" height="2" fill="#d2d5e6"/></svg>
<svg style="position:absolute;left:0;top:0;z-index:5" width="3218" height="1544" viewBox="0 0 3218 1544"><g font-family="Liberation Sans" font-size="24" fill="#0f1a2e"><text x="1081.36" y="840.5" transform="rotate(-45 1081.36 840.5)" text-anchor="end" textLength="136" lengthAdjust="spacingAndGlyphs">arn:aws:clo…</text><text x="1128.57" y="840.5" transform="rotate(-45 1128.57 840.5)" text-anchor="end" textLength="136" lengthAdjust="spacingAndGlyphs">arn:aws:clo…</text><text x="1175.78" y="840.5" transform="rotate(-45 1175.78 840.5)" text-anchor="end" textLength="136" lengthAdjust="spacingAndGlyphs">arn:aws:clo…</text><text x="1222.99" y="840.5" transform="rotate(-45 1222.99 840.5)" text-anchor="end" textLength="136" lengthAdjust="spacingAndGlyphs">arn:aws:clo…</text><text x="1270.21" y="840.5" transform="rotate(-45 1270.21 840.5)" text-anchor="end" textLength="136" lengthAdjust="spacingAndGlyphs">arn:aws:clo…</text><text x="1317.42" y="840.5" transform="rotate(-45 1317.42 840.5)" text-anchor="end" textLength="136" lengthAdjust="spacingAndGlyphs">arn:aws:clo…</text><text x="1364.63" y="840.5" transform="rotate(-45 1364.63 840.5)" text-anchor="end" textLength="136" lengthAdjust="spacingAndGlyphs">arn:aws:clo…</text><text x="1411.84" y="840.5" transform="rotate(-45 1411.84 840.5)" text-anchor="end" textLength="136" lengthAdjust="spacingAndGlyphs">arn:aws:clo…</text><text x="1459.05" y="840.5" transform="rotate(-45 1459.05 840.5)" text-anchor="end" textLength="136" lengthAdjust="spacingAndGlyphs">arn:aws:clo…</text><text x="1506.27" y="840.5" transform="rotate(-45 1506.27 840.5)" text-anchor="end" textLength="136" lengthAdjust="spacingAndGlyphs">arn:aws:clo…</text><text x="1553.48" y="840.5" transform="rotate(-45 1553.48 840.5)" text-anchor="end" textLength="136" lengthAdjust="spacingAndGlyphs">arn:aws:clo…</text><text x="1600.69" y="840.5" transform="rotate(-45 1600.69 840.5)" text-anchor="end" textLength="136" lengthAdjust="spacingAndGlyphs">arn:aws:clo…</text><text x="1647.90" y="840.5" transform="rotate(-45 1647.90 840.5)" text-anchor="end" textLength="136" lengthAdjust="spacingAndGlyphs">arn:aws:clo…</text><text x="1695.11" y="840.5" transform="rotate(-45 1695.11 840.5)" text-anchor="end" textLength="136" lengthAdjust="spacingAndGlyphs">arn:aws:clo…</text><text x="1742.33" y="840.5" transform="rotate(-45 1742.33 840.5)" text-anchor="end" textLength="136" lengthAdjust="spacingAndGlyphs">arn:aws:clo…</text><text x="1789.54" y="840.5" transform="rotate(-45 1789.54 840.5)" text-anchor="end" textLength="136" lengthAdjust="spacingAndGlyphs">arn:aws:clo…</text><text x="1836.75" y="840.5" transform="rotate(-45 1836.75 840.5)" text-anchor="end" textLength="136" lengthAdjust="spacingAndGlyphs">arn:aws:clo…</text><text x="1883.96" y="840.5" transform="rotate(-45 1883.96 840.5)" text-anchor="end" textLength="136" lengthAdjust="spacingAndGlyphs">arn:aws:clo…</text><text x="1931.17" y="840.5" transform="rotate(-45 1931.17 840.5)" text-anchor="end" textLength="136" lengthAdjust="spacingAndGlyphs">arn:aws:clo…</text><text x="1978.39" y="840.5" transform="rotate(-45 1978.39 840.5)" text-anchor="end" textLength="136" lengthAdjust="spacingAndGlyphs">arn:aws:clo…</text><text x="2025.60" y="840.5" transform="rotate(-45 2025.60 840.5)" text-anchor="end" textLength="136" lengthAdjust="spacingAndGlyphs">arn:aws:clo…</text><text x="2072.81" y="840.5" transform="rotate(-45 2072.81 840.5)" text-anchor="end" textLength="136" lengthAdjust="spacingAndGlyphs">arn:aws:clo…</text><text x="2120.02" y="840.5" transform="rotate(-45 2120.02 840.5)" text-anchor="end" textLength="136" lengthAdjust="spacingAndGlyphs">arn:aws:clo…</text><text x="2167.23" y="840.5" transform="rotate(-45 2167.23 840.5)" text-anchor="end" textLength="136" lengthAdjust="spacingAndGlyphs">arn:aws:clo…</text><text x="2214.45" y="840.5" transform="rotate(-45 2214.45 840.5)" text-anchor="end" textLength="136" lengthAdjust="spacingAndGlyphs">arn:aws:clo…</text><text x="2261.66" y="840.5" transform="rotate(-45 2261.66 840.5)" text-anchor="end" textLength="136" lengthAdjust="spacingAndGlyphs">arn:aws:clo…</text><text x="2308.87" y="840.5" transform="rotate(-45 2308.87 840.5)" text-anchor="end" textLength="136" lengthAdjust="spacingAndGlyphs">arn:aws:clo…</text><text x="2356.08" y="840.5" transform="rotate(-45 2356.08 840.5)" text-anchor="end" textLength="136" lengthAdjust="spacingAndGlyphs">arn:aws:clo…</text><text x="2403.29" y="840.5" transform="rotate(-45 2403.29 840.5)" text-anchor="end" textLength="136" lengthAdjust="spacingAndGlyphs">arn:aws:clo…</text><text x="2450.51" y="840.5" transform="rotate(-45 2450.51 840.5)" text-anchor="end" textLength="136" lengthAdjust="spacingAndGlyphs">arn:aws:clo…</text><text x="2497.72" y="840.5" transform="rotate(-45 2497.72 840.5)" text-anchor="end" textLength="136" lengthAdjust="spacingAndGlyphs">arn:aws:clo…</text><text x="2544.93" y="840.5" transform="rotate(-45 2544.93 840.5)" text-anchor="end" textLength="136" lengthAdjust="spacingAndGlyphs">arn:aws:clo…</text><text x="2592.14" y="840.5" transform="rotate(-45 2592.14 840.5)" text-anchor="end" textLength="136" lengthAdjust="spacingAndGlyphs">arn:aws:clo…</text><text x="2639.35" y="840.5" transform="rotate(-45 2639.35 840.5)" text-anchor="end" textLength="136" lengthAdjust="spacingAndGlyphs">arn:aws:clo…</text><text x="2686.57" y="840.5" transform="rotate(-45 2686.57 840.5)" text-anchor="end" textLength="136" lengthAdjust="spacingAndGlyphs">arn:aws:clo…</text><text x="2733.78" y="840.5" transform="rotate(-45 2733.78 840.5)" text-anchor="end" textLength="136" lengthAdjust="spacingAndGlyphs">arn:aws:clo…</text><text x="2780.99" y="840.5" transform="rotate(-45 2780.99 840.5)" text-anchor="end" textLength="136" lengthAdjust="spacingAndGlyphs">arn:aws:clo…</text><text x="2828.20" y="840.5" transform="rotate(-45 2828.20 840.5)" text-anchor="end" textLength="136" lengthAdjust="spacingAndGlyphs">arn:aws:clo…</text><text x="2875.41" y="840.5" transform="rotate(-45 2875.41 840.5)" text-anchor="end" textLength="136" lengthAdjust="spacingAndGlyphs">arn:aws:clo…</text><text x="2922.63" y="840.5" transform="rotate(-45 2922.63 840.5)" text-anchor="end" textLength="136" lengthAdjust="spacingAndGlyphs">arn:aws:clo…</text><text x="2969.84" y="840.5" transform="rotate(-45 2969.84 840.5)" text-anchor="end" textLength="136" lengthAdjust="spacingAndGlyphs">arn:aws:clo…</text><text x="3017.05" y="840.5" transform="rotate(-45 3017.05 840.5)" text-anchor="end" textLength="136" lengthAdjust="spacingAndGlyphs">arn:aws:clo…</text><text x="3064.26" y="840.5" transform="rotate(-45 3064.26 840.5)" text-anchor="end" textLength="136" lengthAdjust="spacingAndGlyphs">arn:aws:clo…</text><text x="3111.47" y="840.5" transform="rotate(-45 3111.47 840.5)" text-anchor="end" textLength="136" lengthAdjust="spacingAndGlyphs">arn:aws:clo…</text><text x="3158.69" y="840.5" transform="rotate(-45 3158.69 840.5)" text-anchor="end" textLength="136" lengthAdjust="spacingAndGlyphs">arn:aws:clo…</text></g><g transform="rotate(-45 1023 842)"><circle cx="1023" cy="842" r="5.6" fill="none" stroke="#0f1a2e" stroke-width="1.7"/><path d="M1016.5 848.5 L1029.5 835.5" stroke="#0f1a2e" stroke-width="1.7"/></g></svg>
<div style="position:absolute;left:682.0px;top:1032.0px;width:2512.0px;height:55.5px;background:#2f333e;border-radius:6px;z-index:2"></div>
<div style="position:absolute;left:856.0px;top:1032.0px;width:158.0px;height:55.5px;background:#60646d;z-index:3"></div>
<svg style="position:absolute;left:714.30px;top:1054.50px;z-index:6;overflow:visible" width="16" height="9" viewBox="0 0 16 9"><path d="M0 0 H15 L7.5 8.6Z" fill="#fff"/></svg>
<div style="position:absolute;left:2481.2px;top:1042.0px;width:202.5px;height:39.8px;background:#60646d;border-radius:5px;z-index:3"></div>
<div style="position:absolute;left:2811.0px;top:1041.2px;width:75.7px;height:39.8px;background:#fff;border:2px solid #c8cbd0;border-radius:4px;box-sizing:border-box;z-index:3"></div>
<div style="position:absolute;left:2908.2px;top:1048.5px;width:23.5px;height:23.3px;background:#fff;border:2px solid #8c8f94;border-radius:5px;box-sizing:border-box;z-index:3"></div>
<div style="position:absolute;left:3032.4px;top:1048.5px;width:23.6px;height:23.3px;background:#fff;border:2px solid #8c8f94;border-radius:5px;box-sizing:border-box;z-index:3"></div>
<div style="position:absolute;left:682.0px;top:1108.3px;width:2512.0px;height:63.2px;background:#f4e8bb;border-radius:6px;z-index:2"></div>
<svg style="position:absolute;left:0.00px;top:0.00px;z-index:6;overflow:visible" width="3218" height="1544" viewBox="0 0 3218 1544"><path transform="translate(703.19 1124.18) scale(1.309)" fill="#c8903c" d="M1 21h22L12 2 1 21zm12-3h-2v-2h2v2zm0-4h-2v-4h2v4z"/></svg>
<svg style="position:absolute;left:3144.20px;top:1127.70px;z-index:6;overflow:visible" width="26" height="26" viewBox="0 0 26 26"><path d="M0 0 L26 26 M26 0 L0 26" stroke="#666a70" stroke-width="2"/></svg>
<div style="position:absolute;left:682.0px;top:1192.2px;width:2512.0px;height:45.5px;background:#cfd9e3;border-radius:4px 4px 0 0;z-index:2"></div>
<div style="position:absolute;left:682.0px;top:1279.6px;width:2512.0px;height:41.9px;background:#f5f6f8;z-index:1"></div>
<div style="position:absolute;left:682.0px;top:1363.4px;width:2512.0px;height:41.9px;background:#f5f6f8;z-index:1"></div>
<div style="position:absolute;left:682.0px;top:1447.2px;width:2512.0px;height:41.9px;background:#f5f6f8;z-index:1"></div>
<div style="position:absolute;left:731.0px;top:1192.2px;width:2.0px;height:338.8px;background:#e1e3e6;z-index:3"></div>
<div style="position:absolute;left:1324.8px;top:1192.2px;width:2.0px;height:338.8px;background:#e1e3e6;z-index:3"></div>
<svg style="position:absolute;left:1014.00px;top:1205.00px;z-index:6;overflow:visible" width="16" height="18" viewBox="0 0 16 18"><path d="M8 17.5 V1.5 M1.2 8.2 L8 1.4 L14.8 8.2" fill="none" stroke="#262d33" stroke-width="2.1"/></svg>
<svg style="position:absolute;left:1291.00px;top:1200.00px;z-index:6;overflow:visible" width="28" height="28" viewBox="0 0 28 28"><path d="M10.40 5.08 L11.08 1.33 L16.92 1.33 L17.60 5.08 L19.92 6.42 L23.51 5.13 L26.43 10.20 L23.53 12.66 L23.53 15.34 L26.43 17.80 L23.51 22.87 L19.92 21.58 L17.60 22.92 L16.92 26.67 L11.08 26.67 L10.40 22.92 L8.08 21.58 L4.49 22.87 L1.57 17.80 L4.47 15.34 L4.47 12.66 L1.57 10.20 L4.49 5.13 L8.08 6.42Z" fill="none" stroke="#50565e" stroke-width="2" stroke-linejoin="miter"/><circle cx="14" cy="14" r="4.3" fill="none" stroke="#50565e" stroke-width="2"/></svg>
<svg style="position:absolute;left:3160.00px;top:1200.00px;z-index:6;overflow:visible" width="28" height="28" viewBox="0 0 28 28"><path d="M10.40 5.08 L11.08 1.33 L16.92 1.33 L17.60 5.08 L19.92 6.42 L23.51 5.13 L26.43 10.20 L23.53 12.66 L23.53 15.34 L26.43 17.80 L23.51 22.87 L19.92 21.58 L17.60 22.92 L16.92 26.67 L11.08 26.67 L10.40 22.92 L8.08 21.58 L4.49 22.87 L1.57 17.80 L4.47 15.34 L4.47 12.66 L1.57 10.20 L4.49 5.13 L8.08 6.42Z" fill="none" stroke="#50565e" stroke-width="2" stroke-linejoin="miter"/><circle cx="14" cy="14" r="4.3" fill="none" stroke="#50565e" stroke-width="2"/></svg>
<svg style="position:absolute;left:741.50px;top:1250.90px;z-index:6;overflow:visible" width="15" height="15" viewBox="0 0 15 15"><ellipse cx="7.3" cy="7.5" rx="6.1" ry="6" fill="none" stroke="#3f454b" stroke-width="1.45"/><path d="M1.7 13.2 L13.2 1.8" stroke="#3f454b" stroke-width="1.45"/></svg>
<svg style="position:absolute;left:1336.00px;top:1250.90px;z-index:6;overflow:visible" width="15" height="15" viewBox="0 0 15 15"><ellipse cx="7.3" cy="7.5" rx="6.1" ry="6" fill="none" stroke="#3f454b" stroke-width="1.45"/><path d="M1.7 13.2 L13.2 1.8" stroke="#3f454b" stroke-width="1.45"/></svg>
<div class="t" style="left:30.98px;top:18.95px;font-size:37.5px;line-height:37.5px;font-weight:400;color:#fff;letter-spacing:0.000px;z-index:5;transform:scaleX(0.9395);transform-origin:0 0;">Edit Tile</div>
<div class="t" style="left:2691.05px;top:24.86px;font-size:24.5px;line-height:24.5px;font-weight:400;color:#fff;letter-spacing:0.000px;z-index:5;transform:scaleX(0.9745);transform-origin:0 0;-webkit-text-stroke-width:0.5px;">Explore from Here</div>
<div class="t" style="left:2932.53px;top:24.86px;font-size:24.5px;line-height:24.5px;font-weight:400;color:#fff;letter-spacing:0.000px;z-index:5;transform:scaleX(0.9730);transform-origin:0 0;-webkit-text-stroke-width:0.5px;">Cancel</div>
<div class="t" style="left:3097.67px;top:24.86px;font-size:24.5px;line-height:24.5px;font-weight:400;color:#3c7fda;letter-spacing:0.000px;z-index:5;transform:scaleX(0.9333);transform-origin:0 0;">Save</div>
<div class="t" style="left:30.84px;top:125.09px;font-size:41px;line-height:41px;font-weight:400;color:#3b4045;letter-spacing:0.000px;z-index:5;transform:scaleX(0.9875);transform-origin:0 0;-webkit-text-stroke:0.7px #f5f5f5;">MultipleTags</div>
<div class="t" style="left:2545.05px;top:147.86px;font-size:24.5px;line-height:24.5px;font-weight:400;color:#3b4045;letter-spacing:0.000px;z-index:5;transform:scaleX(0.9465);transform-origin:0 0;">500 rows · 1.3s · 14m ago · UTC</div>
<div class="t" style="left:2837.50px;top:126.64px;font-size:20.5px;line-height:20.5px;font-weight:400;color:#939aa2;letter-spacing:0.000px;z-index:5;transform:scaleX(0.9742);transform-origin:0 0;">Time Zone</div>
<div class="t" style="left:3029.99px;top:136.26px;font-size:24.5px;line-height:24.5px;font-weight:400;color:#3c7fda;letter-spacing:0.000px;z-index:5;transform:scaleX(0.9548);transform-origin:0 0;">Run</div>
<div class="t" style="left:31.46px;top:266.91px;font-size:32px;line-height:32px;font-weight:700;color:#262d33;letter-spacing:0.000px;z-index:5;transform:scaleX(0.9437);transform-origin:0 0;">AWS</div>
<div class="t" style="left:121.44px;top:339.87px;font-size:28.5px;line-height:28.5px;font-weight:400;color:#787d83;letter-spacing:0.000px;z-index:5;transform:scaleX(0.9610);transform-origin:0 0;">Search Fields Below</div>
<div class="t" style="left:105.20px;top:458.26px;font-size:24.5px;line-height:24.5px;font-weight:400;color:#3a7ddb;letter-spacing:0.000px;z-index:5;transform:scaleX(0.9808);transform-origin:0 0;-webkit-text-stroke-width:0.75px;">All Fields</div>
<div class="t" style="left:443.06px;top:458.26px;font-size:24.5px;line-height:24.5px;font-weight:400;color:#262d33;letter-spacing:0.000px;z-index:5;transform:scaleX(0.9676);transform-origin:0 0;-webkit-text-stroke-width:0.75px;">In Use</div>
<div class="t" style="left:59.52px;top:540.26px;font-size:24.5px;line-height:24.5px;font-weight:400;color:#262d33;letter-spacing:0.000px;z-index:5;transform:scaleX(0.9839);transform-origin:0 0;-webkit-text-stroke-width:0.75px;">Custom Fields</div>
<div class="t" style="left:60.50px;top:606.26px;font-size:24.5px;line-height:24.5px;font-weight:400;color:#262d33;letter-spacing:0.000px;z-index:5;transform:scaleX(0.9296);transform-origin:0 0;-webkit-text-stroke-width:0.75px;">AWS</div>
<div class="t" style="left:60.50px;top:672.56px;font-size:24.5px;line-height:24.5px;font-weight:400;color:#262d33;letter-spacing:0.000px;z-index:5;transform:scaleX(0.9775);transform-origin:0 0;-webkit-text-stroke-width:0.75px;">AWS: Account Tags</div>
<div class="t" style="left:574.60px;top:540.26px;font-size:24.5px;line-height:24.5px;font-weight:400;color:#3a7ddb;letter-spacing:0.000px;z-index:5;transform:scaleX(0.9238);transform-origin:0 0;-webkit-text-stroke-width:0.75px;">Add</div>
<div class="t" style="left:60.50px;top:738.26px;font-size:24.5px;line-height:24.5px;font-weight:400;color:#262d33;letter-spacing:0.000px;z-index:5;transform:scaleX(0.9819);transform-origin:0 0;-webkit-text-stroke-width:0.75px;">AWS: Multiple Tags</div>
<div class="t" style="left:602.70px;top:738.26px;font-size:24.5px;line-height:24.5px;font-weight:700;color:#262d33;letter-spacing:0.000px;z-index:5;">5</div>
<div class="t" style="left:91.10px;top:791.45px;font-size:22.5px;line-height:22.5px;font-weight:400;color:#9aa0a6;letter-spacing:0.000px;z-index:5;transform:scaleX(0.8982);transform-origin:0 0;-webkit-text-stroke-width:0.75px;">FILTER-ONLY FIELDS</div>
<div class="t" style="left:91.17px;top:836.66px;font-size:24.5px;line-height:24.5px;font-weight:400;color:#262d33;letter-spacing:0.000px;z-index:5;transform:scaleX(0.9167);transform-origin:0 0;">Key 1</div>
<div class="t" style="left:91.12px;top:886.26px;font-size:24.5px;line-height:24.5px;font-weight:400;color:#262d33;letter-spacing:0.000px;z-index:5;transform:scaleX(0.9417);transform-origin:0 0;">Key 2</div>
<div class="t" style="left:91.12px;top:935.76px;font-size:24.5px;line-height:24.5px;font-weight:400;color:#262d33;letter-spacing:0.000px;z-index:5;transform:scaleX(0.9417);transform-origin:0 0;">Key 3</div>
<div class="t" style="left:90.13px;top:1005.65px;font-size:22.5px;line-height:22.5px;font-weight:400;color:#9aa0a6;letter-spacing:0.000px;z-index:5;transform:scaleX(0.9357);transform-origin:0 0;-webkit-text-stroke-width:0.75px;">DIMENSIONS</div>
<div class="t" style="left:92.00px;top:1051.26px;font-size:24.5px;line-height:24.5px;font-weight:400;color:#262d33;letter-spacing:0.000px;z-index:5;transform:scaleX(0.9506);transform-origin:0 0;">Value 1</div>
<div class="t" style="left:92.00px;top:1101.26px;font-size:24.5px;line-height:24.5px;font-weight:400;color:#262d33;letter-spacing:0.000px;z-index:5;transform:scaleX(0.9630);transform-origin:0 0;">Value 2</div>
<div class="t" style="left:92.00px;top:1151.26px;font-size:24.5px;line-height:24.5px;font-weight:400;color:#262d33;letter-spacing:0.000px;z-index:5;transform:scaleX(0.9630);transform-origin:0 0;">Value 3</div>
<div class="t" style="left:60.00px;top:1233.06px;font-size:24.5px;line-height:24.5px;font-weight:400;color:#262d33;letter-spacing:0.000px;z-index:5;transform:scaleX(0.9563);transform-origin:0 0;-webkit-text-stroke-width:0.75px;">AWS: Tags</div>
<div class="t" style="left:14.78px;top:1528.76px;font-size:24.5px;line-height:24.5px;font-weight:400;color:#80868b;letter-spacing:0.000px;z-index:5;transform:scaleX(0.9200);transform-origin:0 0;">32 fields</div>
<div class="t" style="left:745.35px;top:270.26px;font-size:24.5px;line-height:24.5px;font-weight:700;color:#fff;letter-spacing:0.000px;z-index:5;transform:scaleX(0.9491);transform-origin:0 0;">Filters (3)</div>
<div class="t" style="left:3031.03px;top:270.56px;font-size:24.5px;line-height:24.5px;font-weight:400;color:#fff;letter-spacing:0.000px;z-index:5;transform:scaleX(0.9745);transform-origin:0 0;-webkit-text-stroke-width:0.5px;">Custom Filter</div>
<div class="t" style="left:752.70px;top:350.46px;font-size:24.5px;line-height:24.5px;font-weight:400;color:#262d33;letter-spacing:0.000px;z-index:5;transform:scaleX(0.9700);transform-origin:0 0;">AWS: Multiple Tags</div>
<div class="t" style="left:963.24px;top:350.46px;font-size:24.5px;line-height:24.5px;font-weight:700;color:#262d33;letter-spacing:0.000px;z-index:5;transform:scaleX(0.8578);transform-origin:0 0;">Key 1</div>
<div class="t" style="left:1157.61px;top:350.46px;font-size:24.5px;line-height:24.5px;font-weight:400;color:#262d33;letter-spacing:0.000px;z-index:5;transform:scaleX(0.9909);transform-origin:0 0;">is equal to</div>
<div class="t" style="left:1507.74px;top:350.46px;font-size:24.5px;line-height:24.5px;font-weight:400;color:#45494e;letter-spacing:0.000px;z-index:5;transform:scaleX(0.9592);transform-origin:0 0;">user_Name</div>
<div class="t" style="left:752.70px;top:456.06px;font-size:24.5px;line-height:24.5px;font-weight:400;color:#262d33;letter-spacing:0.000px;z-index:5;transform:scaleX(0.9700);transform-origin:0 0;">AWS: Multiple Tags</div>
<div class="t" style="left:963.24px;top:456.06px;font-size:24.5px;line-height:24.5px;font-weight:700;color:#262d33;letter-spacing:0.000px;z-index:5;transform:scaleX(0.8578);transform-origin:0 0;">Key 2</div>
<div class="t" style="left:1157.61px;top:456.06px;font-size:24.5px;line-height:24.5px;font-weight:400;color:#262d33;letter-spacing:0.000px;z-index:5;transform:scaleX(0.9909);transform-origin:0 0;">is equal to</div>
<div class="t" style="left:1507.71px;top:456.06px;font-size:24.5px;line-height:24.5px;font-weight:400;color:#45494e;letter-spacing:0.000px;z-index:5;transform:scaleX(0.9918);transform-origin:0 0;">aws_cloudformation_logical_id</div>
<div class="t" style="left:746.00px;top:526.86px;font-size:24.5px;line-height:24.5px;font-weight:700;color:#fff;letter-spacing:0.000px;z-index:5;transform:scaleX(0.9358);transform-origin:0 0;">Visualization</div>
<div class="t" style="left:2863.06px;top:527.36px;font-size:24.5px;line-height:24.5px;font-weight:400;color:#fff;letter-spacing:0.000px;z-index:5;transform:scaleX(0.9688);transform-origin:0 0;">Forecast</div>
<div class="t" style="left:3057.93px;top:527.36px;font-size:24.5px;line-height:24.5px;font-weight:400;color:#fff;letter-spacing:0.000px;z-index:5;transform:scaleX(0.9667);transform-origin:0 0;">Settings</div>
<div class="t" style="left:886.03px;top:601.26px;font-size:24.5px;line-height:24.5px;font-weight:400;color:#0f1a2e;letter-spacing:0.000px;z-index:5;transform:scaleX(0.9735);transform-origin:0 0;">SMS3JIZ5</div>
<div class="t" style="left:873.02px;top:633.06px;font-size:24.5px;line-height:24.5px;font-weight:400;color:#0f1a2e;letter-spacing:0.000px;z-index:5;transform:scaleX(0.9762);transform-origin:0 0;">SMS3JIZ18</div>
<div class="t" style="left:873.02px;top:664.76px;font-size:24.5px;line-height:24.5px;font-weight:400;color:#0f1a2e;letter-spacing:0.000px;z-index:5;transform:scaleX(0.9762);transform-origin:0 0;">SMS3JIZ10</div>
<div class="t" style="left:882.03px;top:699.06px;font-size:24.5px;line-height:24.5px;font-weight:400;color:#0f1a2e;letter-spacing:0.000px;z-index:5;transform:scaleX(0.9661);transform-origin:0 0;">S31Bucket</div>
<div class="t" style="left:749.83px;top:730.96px;font-size:24.5px;line-height:24.5px;font-weight:400;color:#0f1a2e;letter-spacing:0.000px;z-index:5;transform:scaleX(0.9847);transform-origin:0 0;">Hello1LambdaFunction</div>
<div class="t" style="left:866.35px;top:763.26px;font-size:24.5px;line-height:24.5px;font-weight:400;color:#0f1a2e;letter-spacing:0.000px;z-index:5;transform:scaleX(0.9750);transform-origin:0 0;">Ec2Instance</div>
<div class="t" style="left:2061.60px;top:954.26px;font-size:24.5px;line-height:24.5px;font-weight:400;color:#0f1a2e;letter-spacing:0.000px;z-index:5;transform:scaleX(0.9494);transform-origin:0 0;">Value 3</div>
<div class="t" style="left:745.07px;top:1046.86px;font-size:24.5px;line-height:24.5px;font-weight:700;color:#fff;letter-spacing:0.000px;z-index:5;transform:scaleX(0.9283);transform-origin:0 0;">Data</div>
<div class="t" style="left:894.76px;top:1046.86px;font-size:24.5px;line-height:24.5px;font-weight:400;color:#fff;letter-spacing:0.000px;z-index:5;transform:scaleX(0.9684);transform-origin:0 0;">Results</div>
<div class="t" style="left:2499.00px;top:1049.86px;font-size:24.5px;line-height:24.5px;font-weight:700;color:#fff;letter-spacing:0.000px;z-index:5;transform:scaleX(0.9171);transform-origin:0 0;">Add calculation</div>
<div class="t" style="left:2697.83px;top:1049.86px;font-size:24.5px;line-height:24.5px;font-weight:400;color:#fff;letter-spacing:0.000px;z-index:5;transform:scaleX(0.9858);transform-origin:0 0;-webkit-text-stroke-width:0.5px;">Row Limit</div>
<div class="t" style="left:2821.60px;top:1049.86px;font-size:24.5px;line-height:24.5px;font-weight:400;color:#6b7075;letter-spacing:0.200px;z-index:5;">500</div>
<div class="t" style="left:2939.00px;top:1049.86px;font-size:24.5px;line-height:24.5px;font-weight:400;color:#fff;letter-spacing:0.480px;z-index:5;-webkit-text-stroke-width:0.5px;">Totals</div>
<div class="t" style="left:3061.70px;top:1049.86px;font-size:24.5px;line-height:24.5px;font-weight:400;color:#fff;letter-spacing:0.000px;z-index:5;transform:scaleX(0.9970);transform-origin:0 0;-webkit-text-stroke-width:0.5px;">Subtotals</div>
<div class="t" style="left:754.08px;top:1127.26px;font-size:24.5px;line-height:24.5px;font-weight:700;color:#262d33;letter-spacing:0.000px;z-index:5;transform:scaleX(0.9178);transform-origin:0 0;">Row limit reached.</div>
<div class="t" style="left:958.04px;top:1127.26px;font-size:24.5px;line-height:24.5px;font-weight:400;color:#262d33;letter-spacing:0.000px;z-index:5;transform:scaleX(0.9801);transform-origin:0 0;">Results may be incomplete</div>
<div class="t" style="left:741.20px;top:1203.05px;font-size:22.5px;line-height:22.5px;font-weight:400;color:#262d33;letter-spacing:0.000px;z-index:5;transform:scaleX(0.9679);transform-origin:0 0;">AWS: Multiple Tags</div>
<div class="t" style="left:934.60px;top:1203.05px;font-size:22.5px;line-height:22.5px;font-weight:700;color:#262d33;letter-spacing:0.000px;z-index:5;transform:scaleX(0.9377);transform-origin:0 0;">Value 2</div>
<div class="t" style="left:1335.60px;top:1203.05px;font-size:22.5px;line-height:22.5px;font-weight:400;color:#262d33;letter-spacing:0.000px;z-index:5;transform:scaleX(0.9658);transform-origin:0 0;">AWS: Multiple Tags</div>
<div class="t" style="left:1528.60px;top:1203.05px;font-size:22.5px;line-height:22.5px;font-weight:700;color:#262d33;letter-spacing:0.000px;z-index:5;transform:scaleX(0.9390);transform-origin:0 0;">Value 3</div>
<div class="t" style="left:712.30px;top:1247.95px;font-size:22.5px;line-height:22.5px;font-weight:400;color:#4a5056;letter-spacing:0.000px;z-index:5;">1</div>
<div class="t" style="left:712.30px;top:1289.85px;font-size:22.5px;line-height:22.5px;font-weight:400;color:#4a5056;letter-spacing:0.000px;z-index:5;">2</div>
<div class="t" style="left:741.50px;top:1289.85px;font-size:22.5px;line-height:22.5px;font-weight:400;color:#262d33;letter-spacing:0.000px;z-index:5;transform:scaleX(0.9807);transform-origin:0 0;">AppLambdaFunction</div>
<div class="t" style="left:1334.92px;top:1289.85px;font-size:22.5px;line-height:22.5px;font-weight:400;color:#262d33;letter-spacing:0.000px;z-index:5;transform:scaleX(0.9829);transform-origin:0 0;">arn:aws:cloudformation:us-east-2:448640225317:stack/express-way-dev/a70f71a0-04bd-11ec-89b1-0241944885e0</div>
<div class="t" style="left:712.30px;top:1331.75px;font-size:22.5px;line-height:22.5px;font-weight:400;color:#4a5056;letter-spacing:0.000px;z-index:5;">3</div>
<div class="t" style="left:740.53px;top:1331.75px;font-size:22.5px;line-height:22.5px;font-weight:400;color:#262d33;letter-spacing:0.000px;z-index:5;transform:scaleX(0.9663);transform-origin:0 0;">CodeHashLambda</div>
<div class="t" style="left:1334.91px;top:1331.75px;font-size:22.5px;line-height:22.5px;font-weight:400;color:#262d33;letter-spacing:0.000px;z-index:5;transform:scaleX(0.9870);transform-origin:0 0;">arn:aws:cloudformation:us-east-1:448640225317:stack/canary-custom/ae209e50-7a48-11ec-9496-0a7f234b925f</div>
<div class="t" style="left:712.30px;top:1373.65px;font-size:22.5px;line-height:22.5px;font-weight:400;color:#4a5056;letter-spacing:0.000px;z-index:5;">4</div>
<div class="t" style="left:740.52px;top:1373.65px;font-size:22.5px;line-height:22.5px;font-weight:400;color:#262d33;letter-spacing:0.000px;z-index:5;transform:scaleX(0.9805);transform-origin:0 0;">ControlPlane</div>
<div class="t" style="left:1334.91px;top:1373.65px;font-size:22.5px;line-height:22.5px;font-weight:400;color:#262d33;letter-spacing:0.000px;z-index:5;transform:scaleX(0.9853);transform-origin:0 0;">arn:aws:cloudformation:us-east-1:448640225317:stack/eksctl-test-cluster-1-cluster/2e7972e0-9b21-11ec-99e2-0ae679942085</div>
<div class="t" style="left:712.30px;top:1415.55px;font-size:22.5px;line-height:22.5px;font-weight:400;color:#4a5056;letter-spacing:0.000px;z-index:5;">5</div>
<div class="t" style="left:740.52px;top:1415.55px;font-size:22.5px;line-height:22.5px;font-weight:400;color:#262d33;letter-spacing:0.000px;z-index:5;transform:scaleX(0.9805);transform-origin:0 0;">ControlPlane</div>
<div class="t" style="left:1334.91px;top:1415.55px;font-size:22.5px;line-height:22.5px;font-weight:400;color:#262d33;letter-spacing:0.000px;z-index:5;transform:scaleX(0.9872);transform-origin:0 0;">arn:aws:cloudformation:us-east-2:448640225317:stack/eksctl-jelena-test-cluster/4e14a830-5874-11ec-adb8-0a9b9cd9c6f2</div>
<div class="t" style="left:712.30px;top:1457.45px;font-size:22.5px;line-height:22.5px;font-weight:400;color:#4a5056;letter-spacing:0.000px;z-index:5;">6</div>
<div class="t" style="left:740.52px;top:1457.45px;font-size:22.5px;line-height:22.5px;font-weight:400;color:#262d33;letter-spacing:0.000px;z-index:5;transform:scaleX(0.9805);transform-origin:0 0;">ControlPlane</div>
<div class="t" style="left:1334.91px;top:1457.45px;font-size:22.5px;line-height:22.5px;font-weight:400;color:#262d33;letter-spacing:0.000px;z-index:5;transform:scaleX(0.9874);transform-origin:0 0;">arn:aws:cloudformation:us-east-2:448640225317:stack/eksctl-jelena-test-cluster/703003b0-5c1b-11ec-ae57-0a466fdac85c</div>
<div class="t" style="left:712.30px;top:1499.35px;font-size:22.5px;line-height:22.5px;font-weight:400;color:#4a5056;letter-spacing:0.000px;z-index:5;">7</div>
<div class="t" style="left:740.52px;top:1499.35px;font-size:22.5px;line-height:22.5px;font-weight:400;color:#262d33;letter-spacing:0.000px;z-index:5;transform:scaleX(0.9805);transform-origin:0 0;">ControlPlane</div>
<div class="t" style="left:1334.91px;top:1499.35px;font-size:22.5px;line-height:22.5px;font-weight:400;color:#262d33;letter-spacing:0.000px;z-index:5;transform:scaleX(0.9887);transform-origin:0 0;">arn:aws:cloudformation:us-east-2:448640225317:stack/eksctl-jelena-test4-cluster/75b0dce0-5817-11ec-adb1-0a662af2cf36</div>
</body></html>
